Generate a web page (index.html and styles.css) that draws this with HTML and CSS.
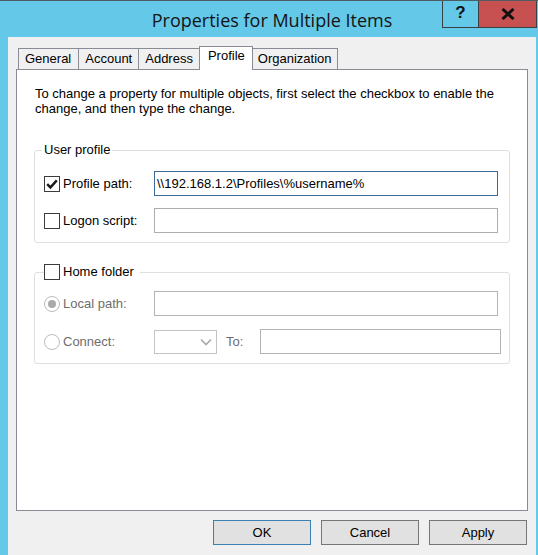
FILE: index.html
```html
<!DOCTYPE html>
<html>
<head>
<meta charset="utf-8">
<title>Properties for Multiple Items</title>
<link rel="stylesheet" href="styles.css">
</head>
<body>
<div class="window">
  <div class="titlebar">
    <span class="title">Properties for Multiple Items</span>
    <div class="caption">
      <div class="cbtn help">?</div>
      <div class="cbtn close">
        <svg width="14" height="12" viewBox="0 0 14 12"><path d="M1.5 1 L12.5 11 M12.5 1 L1.5 11" stroke="#111" stroke-width="3" fill="none"/></svg>
      </div>
    </div>
  </div>
  <div class="client">
    <div class="tabs">
      <div class="tab first">General</div>
      <div class="tab">Account</div>
      <div class="tab">Address</div>
      <div class="tab active">Profile</div>
      <div class="tab last">Organization</div>
    </div>
    <div class="panel">
      <p class="desc">To change a property for multiple objects, first select the checkbox to enable the change, and then type the change.</p>
      <fieldset class="group user">
        <legend>User profile</legend>
        <div class="row">
          <div class="lab"><span class="box checked"><svg width="14" height="14" viewBox="0 0 14 14"><path d="M2.2 7.2 L5.4 10.4 L11.8 3.4" stroke="#1a1a1a" stroke-width="2.4" fill="none"/></svg></span><span>Profile path:</span></div>
          <div class="field focus">\\192.168.1.2\Profiles\%username%</div>
        </div>
        <div class="row">
          <div class="lab"><span class="box"></span><span>Logon script:</span></div>
          <div class="field"></div>
        </div>
      </fieldset>
      <fieldset class="group home">
        <legend><span class="box"></span><span>Home folder</span></legend>
        <div class="row">
          <div class="lab dis"><span class="radio on"></span><span>Local path:</span></div>
          <div class="field dis"></div>
        </div>
        <div class="row">
          <div class="lab dis"><span class="radio"></span><span>Connect:</span></div>
          <div class="combo"><svg width="12" height="8" viewBox="0 0 12 8"><path d="M1 1.5 L6 6.5 L11 1.5" stroke="#a8a8a8" stroke-width="1.6" fill="none"/></svg></div>
          <span class="to dis">To:</span>
          <div class="field dis wide"></div>
        </div>
      </fieldset>
    </div>
    <div class="buttons">
      <div class="btn default">OK</div>
      <div class="btn">Cancel</div>
      <div class="btn">Apply</div>
    </div>
  </div>
</div>
</body>
</html>
```
FILE: styles.css
```css
html, body {
  margin: 0;
  padding: 0;
}
body {
  width: 538px;
  height: 555px;
  overflow: hidden;
  background: #64c8e9;
  font-family: "Liberation Sans", Arial, sans-serif;
  font-size: 13px;
  color: #000;
}
.window {
  display: flex;
  flex-direction: column;
  height: 555px;
  box-sizing: border-box;
  border-top: 1px solid #4e5b61;
}
.titlebar {
  position: relative;
  height: 36px;
  flex: none;
  display: flex;
  align-items: center;
  justify-content: center;
}
.title {
  font-family: "Open Sans", "Noto Sans", sans-serif;
  font-size: 18px;
  color: #141414;
  padding-left: 6px;
  margin-top: 1px;
}
.caption {
  position: absolute;
  top: 0;
  right: 1px;
  display: flex;
}
.cbtn {
  height: 27px;
  box-sizing: border-box;
  border: 1px solid #3a3f42;
  border-top: none;
  display: flex;
  align-items: center;
  justify-content: center;
}
.help {
  width: 37px;
  font-family: "Liberation Sans", Arial, sans-serif;
  font-weight: bold;
  font-size: 17px;
  color: #111;
  padding-bottom: 2px;
}
.close {
  width: 59px;
  margin-left: -1px;
  background: #c75050;
}
.client {
  flex: 1;
  margin: 0 2px 0 8px;
  background: #f0f0f0;
  display: flex;
  flex-direction: column;
  padding: 9px 8px 0 8px;
}
.tabs {
  display: flex;
  align-items: flex-end;
  padding-left: 2px;
  height: 23px;
  position: relative;
  z-index: 1;
}
.tab {
  height: 21px;
  box-sizing: border-box;
  border: 1px solid #898c95;
  border-bottom: none;
  padding: 0 6px;
  line-height: 20px;
  background: #f0f0f0;
  margin-left: -1px;
}
.tab.first {
  margin-left: 0;
  padding: 0 7px 0 6px;
}
.tab.last {
  padding: 0 5px;
}
.tab.active {
  height: 24px;
  margin-bottom: -1px;
  background: #fff;
  padding: 0 7px 0 8px;
  line-height: 18px;
}
.panel {
  flex: 1;
  background: #fff;
  border: 1px solid #898c95;
  padding: 16px 17px 0;
}
.desc {
  margin: 0;
  padding-left: 1px;
  line-height: 15px;
}
.group {
  margin: 26px 0 0;
  padding: 13px 10px 9px 9px;
  border: 1px solid #dcdfe3;
  border-radius: 3px;
  min-width: 0;
}
.group legend {
  padding: 0 2px;
  margin-left: -2px;
  line-height: 16px;
}
.group.home {
  margin-top: 21px;
  padding-top: 11px;
  padding-bottom: 9px;
}
.group.home legend {
  display: flex;
  align-items: center;
  padding: 0 6px 0 0;
  margin-left: 0;
}
.row {
  display: flex;
  align-items: center;
  height: 25px;
}
.row + .row {
  margin-top: 12px;
}
.home .row + .row {
  margin-top: 13px;
}
.lab {
  width: 110px;
  display: flex;
  align-items: center;
  flex: none;
}
.box {
  width: 16px;
  height: 16px;
  box-sizing: border-box;
  border: 1px solid #3c3c3c;
  background: #fff;
  margin-right: 3px;
  display: flex;
  align-items: center;
  justify-content: center;
  flex: none;
}
.radio {
  width: 16px;
  height: 16px;
  box-sizing: border-box;
  border: 1px solid #bcbcbc;
  border-radius: 50%;
  background: #fff;
  margin-right: 3px;
  display: flex;
  align-items: center;
  justify-content: center;
  flex: none;
}
.radio.on::after {
  content: "";
  width: 8px;
  height: 8px;
  border-radius: 50%;
  background: #a9a9a9;
}
.dis {
  color: #6d6d6d;
}
.field {
  width: 344px;
  height: 25px;
  box-sizing: border-box;
  border: 1px solid #abadb3;
  background: #fff;
  padding: 0 2px;
  line-height: 23px;
  white-space: nowrap;
  flex: none;
}
.field.focus {
  border-color: #3d6a94;
}
.field.dis {
  border-color: #b4b4b4;
}
.combo {
  width: 63px;
  height: 24px;
  box-sizing: border-box;
  border: 1px solid #c3c3c3;
  background: #fff;
  display: flex;
  align-items: center;
  justify-content: flex-end;
  padding-right: 4px;
  flex: none;
}
.to {
  width: 34px;
  margin-left: 9px;
  flex: none;
}
.field.wide {
  width: 241px;
}
.buttons {
  display: flex;
  justify-content: flex-end;
  gap: 10px;
  padding: 9px 1px 10px 0;
  flex: none;
}
.btn {
  width: 98px;
  height: 25px;
  box-sizing: border-box;
  border: 1px solid #767676;
  background: #e1e1e1;
  display: flex;
  align-items: center;
  justify-content: center;
}
.btn.default {
  border-color: #3c7fb1;
}
```
